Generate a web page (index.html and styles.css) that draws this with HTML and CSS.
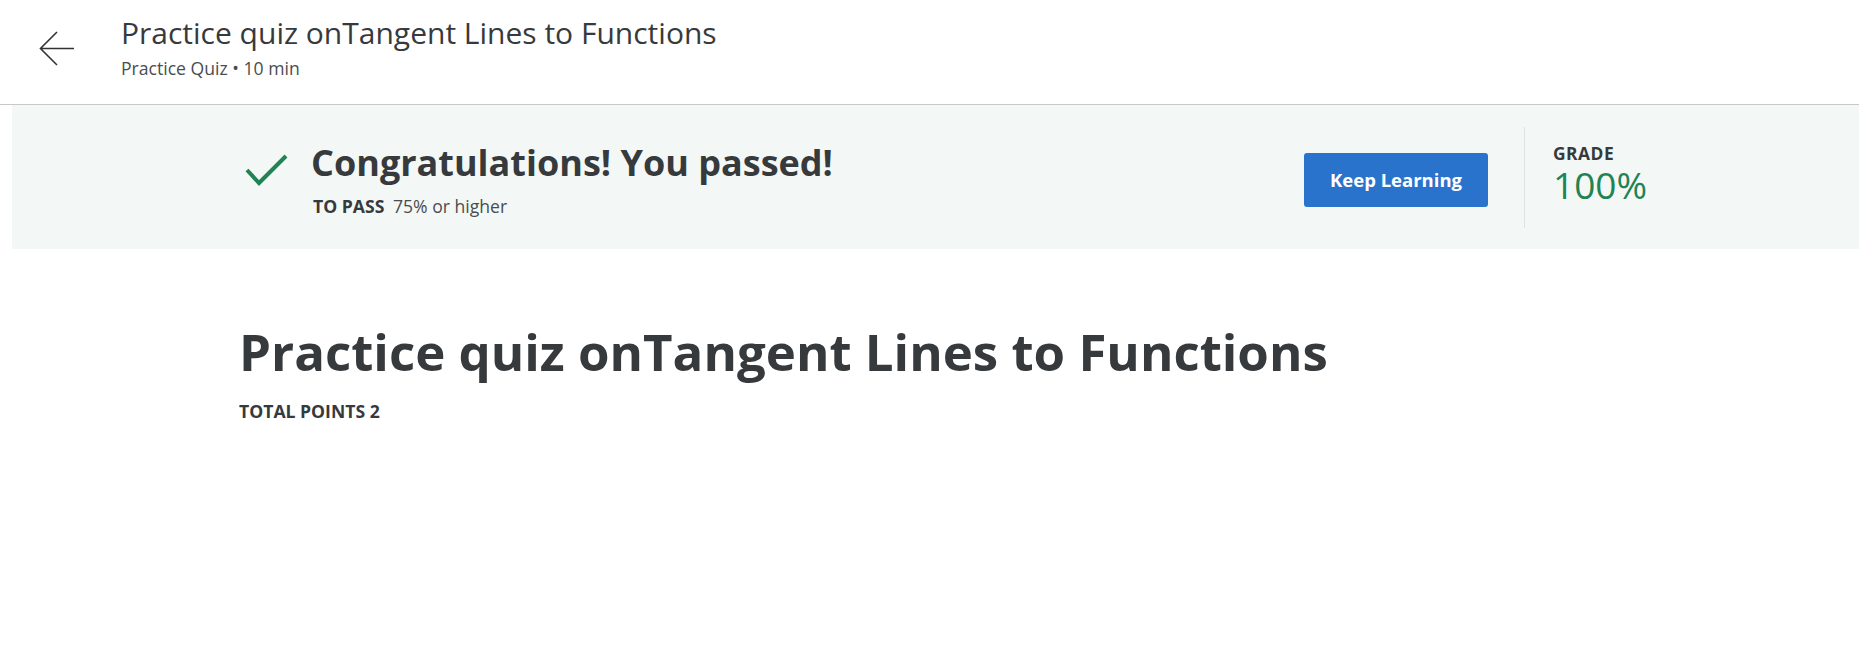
FILE: index.html
```html
<!DOCTYPE html>
<html lang="en">
<head>
<meta charset="utf-8">
<title>Practice quiz onTangent Lines to Functions</title>
<link rel="stylesheet" href="styles.css">
</head>
<body>
<header class="topbar">
  <button class="back" aria-label="Back">
    <svg width="36" height="36" viewBox="0 0 36 36" aria-hidden="true">
      <path d="M35 17.5H1.5M18 1L1.5 17.5L18 34" fill="none" stroke="#333" stroke-width="1.6"/>
    </svg>
  </button>
  <div class="topbar-text">
    <h1 class="topbar-title">Practice quiz onTangent Lines to Functions</h1>
    <div class="topbar-sub">Practice Quiz • 10 min</div>
  </div>
</header>

<section class="banner">
  <div class="banner-inner">
    <div class="result">
      <svg class="check" width="44" height="34" viewBox="0 0 44 34" aria-hidden="true">
        <path d="M2 16L14 29L41 2" fill="none" stroke="#1f8354" stroke-width="4"/>
      </svg>
      <div class="result-text">
        <h2 class="result-title">Congratulations! You passed!</h2>
        <div class="to-pass"><span class="label">TO PASS</span> 75% or higher</div>
      </div>
    </div>
    <button class="keep">Keep Learning</button>
    <div class="divider"></div>
    <div class="grade">
      <div class="grade-label">GRADE</div>
      <div class="grade-value">100%</div>
    </div>
  </div>
</section>

<main class="content">
  <h1 class="quiz-title">Practice quiz onTangent Lines to Functions</h1>
  <div class="points">TOTAL POINTS 2</div>
</main>
</body>
</html>
```

FILE: styles.css
```css
* { box-sizing: border-box; }
html, body { margin: 0; padding: 0; background: #fff; }
body {
  font-family: "Open Sans", "Noto Sans", sans-serif;
  color: #373a3c;
}

.topbar {
  display: flex;
  align-items: flex-start;
  height: 105px;
  border-bottom: 1px solid #c8c8c8;
  padding: 0 0 0 39px;
}
.back {
  margin: 31px 0 0 0;
  padding: 0;
  border: 0;
  background: none;
  width: 36px;
  height: 36px;
  display: block;
}
.back svg { display: block; }
.topbar-text { margin-left: 46px; padding-top: 13px; }
.topbar-title {
  margin: 0;
  font-weight: 400;
  font-size: 30px;
  line-height: 40px;
  color: #373a3c;
}
.topbar-sub {
  margin-top: 3px;
  font-size: 17.6px;
  line-height: 24px;
  color: #4a4d50;
}

.banner {
  margin-left: 12px;
  background: #f3f8f6;
  height: 144px;
}
.banner-inner {
  display: flex;
  align-items: center;
  height: 100%;
  padding-left: 233px;
}
.result {
  display: flex;
  align-items: flex-start;
  width: 1059px;
  padding-top: 4px;
}
.check { margin-top: 13px; flex: none; }
.result-text { margin-left: 22px; width: max-content; }
.result-title {
  margin: 0;
  font-size: 36px;
  font-weight: 700;
  line-height: 44px;
  color: #373a3c;
}
.to-pass {
  margin-top: 9px;
  padding-left: 2px;
  font-size: 17.6px;
  line-height: 24px;
  color: #4a4d50;
}
.to-pass .label {
  font-weight: 700;
  color: #373a3c;
  margin-right: 4px;
}

.keep {
  flex: none;
  width: 184px;
  height: 54px;
  border: 0;
  border-radius: 3px;
  background: #2a73cc;
  color: #fff;
  font-family: "Open Sans", "Noto Sans", sans-serif;
  font-weight: 700;
  font-size: 18.5px;
  line-height: 24px;
  margin-top: 6px;
}
.divider {
  flex: none;
  width: 1px;
  height: 101px;
  background: #dde3e1;
  margin: 0 28px 0 36px;
}
.grade { padding-bottom: 6px; }
.grade-label {
  font-size: 17.4px;
  font-weight: 700;
  letter-spacing: 0.5px;
  line-height: 22px;
  color: #373a3c;
}
.grade-value {
  font-size: 37px;
  line-height: 42px;
  color: #1f8354;
}

.content {
  padding: 67px 0 0 239px;
}
.quiz-title {
  margin: 0;
  font-size: 51px;
  font-weight: 700;
  line-height: 70px;
  color: #373a3c;
}
.points {
  margin-top: 13px;
  font-size: 17.6px;
  font-weight: 700;
  color: #373a3c;
}
```
